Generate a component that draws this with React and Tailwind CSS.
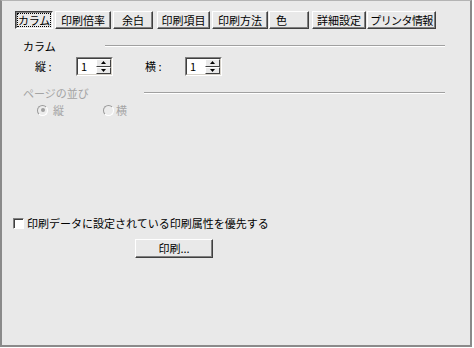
import React from "react";

const tabs = [
  { label: "カラム", cls: "w-[38px]", active: true },
  { label: "印刷倍率", cls: "w-[56px] ml-[2px]" },
  { label: "余白", cls: "w-[40px] ml-[2px]" },
  { label: "印刷項目", cls: "w-[53px] ml-[4px]" },
  { label: "印刷方法", cls: "w-[56px] ml-[2px]" },
  { label: "色", cls: "w-[40px] ml-[1px] justify-start pl-[6px]" },
  { label: "詳細設定", cls: "w-[54px] ml-[3px]" },
  { label: "プリンタ情報", cls: "w-[69px] ml-[1px] tracking-[-0.6px]" },
];

function Tab({ label, cls, active }) {
  if (active) {
    return (
      <div
        className={`${cls} h-[18px] flex items-center justify-center whitespace-nowrap border border-t-[#404040] border-l-[#404040] border-b-white border-r-white shadow-[inset_1px_1px_0_#808080]`}
      >
        <span className="border border-dotted border-black leading-[12px] tracking-[-0.3px]">
          {label}
        </span>
      </div>
    );
  }
  return (
    <div
      className={`${cls} h-[18px] flex items-center justify-center whitespace-nowrap border border-t-white border-l-white border-b-[#404040] border-r-[#404040] shadow-[inset_-1px_-1px_0_#808080] leading-none`}
    >
      {label}
    </div>
  );
}

function Etched({ cls }) {
  return <div className={`${cls} h-[2px] border-t border-t-[#a0a0a0] border-b border-b-white`} />;
}

function Arrow({ up }) {
  return (
    <svg width="5" height="3" viewBox="0 0 5 3">
      {up ? (
        <polygon points="2.5,0 5,3 0,3" fill="#000" />
      ) : (
        <polygon points="0,0 5,0 2.5,3" fill="#000" />
      )}
    </svg>
  );
}

function Spinner() {
  return (
    <div className="w-[37px] h-[19px] border border-t-[#808080] border-l-[#808080] border-b-white border-r-white">
      <div className="w-full h-full flex border border-t-[#404040] border-l-[#404040] border-b-[#d4d0c8] border-r-[#d4d0c8] bg-white">
        <div className="flex-1 flex items-center pl-[3px] leading-none">1</div>
        <div className="w-[15px] flex flex-col bg-[#e9e9e9]">
          <div className="flex-1 flex items-center justify-center border border-t-white border-l-white border-b-[#404040] border-r-[#404040]">
            <Arrow up />
          </div>
          <div className="flex-1 flex items-center justify-center border border-t-white border-l-white border-b-[#404040] border-r-[#404040]">
            <Arrow />
          </div>
        </div>
      </div>
    </div>
  );
}

function Radio({ checked }) {
  return (
    <div className="w-[11px] h-[11px] rounded-full border border-t-[#9a9a9a] border-l-[#9a9a9a] border-b-white border-r-white flex items-center justify-center bg-[#ececec]">
      {checked && <div className="w-[4px] h-[4px] rounded-full bg-[#a0a0a0]" />}
    </div>
  );
}

export default function App() {
  return (
    <div className="w-[474px] h-[348px] bg-white font-['Noto_Sans_CJK_JP','Noto_Sans_CJK_SC',sans-serif] text-[11px] text-black">
      <div className="w-[472px] h-[347px] border-2 border-t border-[#8a8a8a] border-t-[#b4b4b4] bg-[#e9e9e9] flex flex-col">
        {/* tabs */}
        <div className="flex pt-[10px] pl-[13px]">
          {tabs.map((t) => (
            <Tab key={t.label} {...t} />
          ))}
        </div>

        {/* カラム header */}
        <div className="flex items-center mt-[11px] ml-[21px] h-[12px]">
          <span className="w-[82px] leading-none">カラム</span>
          <Etched cls="w-[340px]" />
        </div>

        {/* spinner row */}
        <div className="flex items-center mt-[5px] ml-[33px]">
          <span className="w-[41px] leading-none">縦 :</span>
          <Spinner />
          <span className="w-[40px] ml-[32px] leading-none">横 :</span>
          <Spinner />
        </div>

        {/* ページの並び header */}
        <div className="flex items-center mt-[11px] ml-[21px] h-[12px] text-[#a4a4a4]">
          <span className="w-[121px] leading-none">ページの並び</span>
          <Etched cls="w-[301px]" />
        </div>

        {/* radios */}
        <div className="flex items-center mt-[5px] ml-[35px] h-[12px] text-[#a4a4a4]">
          <Radio checked />
          <span className="ml-[5px] w-[50px] leading-none">縦</span>
          <Radio />
          <span className="ml-[2px] leading-none">横</span>
        </div>

        {/* checkbox */}
        <div className="flex items-center mt-[101px] ml-[11px] h-[12px]">
          <div className="w-[11px] h-[11px] border border-t-[#808080] border-l-[#808080] border-b-white border-r-white bg-white shadow-[inset_1px_1px_0_#404040]" />
          <span className="ml-[3px] leading-none">印刷データに設定されている印刷属性を優先する</span>
        </div>

        {/* print button */}
        <div className="mt-[10px] ml-[133px]">
          <div className="w-[78px] h-[19px] flex items-center justify-center border border-t-white border-l-white border-b-[#404040] border-r-[#404040] shadow-[inset_-1px_-1px_0_#808080] leading-none">
            印刷...
          </div>
        </div>
      </div>
    </div>
  );
}
